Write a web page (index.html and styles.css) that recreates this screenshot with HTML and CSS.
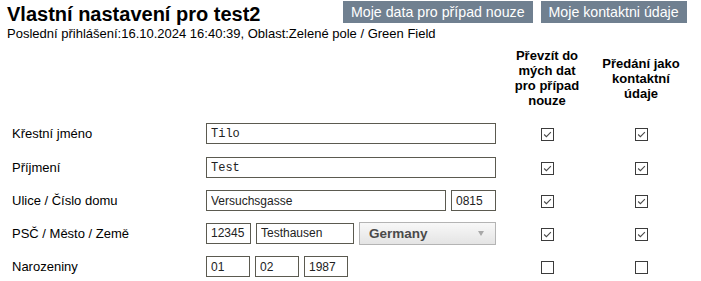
FILE: index.html
```html
<!DOCTYPE html>
<html lang="cs">
<head>
    <meta charset="UTF-8">
    <title>Vlastní nastavení</title>
    <link rel="stylesheet" href="styles.css">
</head>
<body>
    <div class="page">
        <div class="header">
            <h1>Vlastní nastavení pro test2</h1>
            <div class="actions">
                <a class="btn" href="#">Moje data pro případ nouze</a>
                <a class="btn" href="#">Moje kontaktni údaje</a>
            </div>
        </div>
        <div class="last-login">Poslední přihlášení:16.10.2024 16:40:39, Oblast:Zelené pole / Green Field</div>

        <table class="settings">
            <thead>
                <tr>
                    <th class="col-label"></th>
                    <th class="col-field"></th>
                    <th class="col-emergency">Převzít do mých dat pro případ nouze</th>
                    <th class="col-contact">Předání jako kontaktní údaje</th>
                </tr>
            </thead>
            <tbody>
                <tr class="first">
                    <td class="label">Křestní jméno</td>
                    <td><div class="fields"><input class="mono w-full" type="text" value="Tilo"></div></td>
                    <td class="check"><span class="box"><svg viewBox="0 0 13 13"><path d="M2.5 6.5 L5.2 9 L10.5 3.8" /></svg></span></td>
                    <td class="check"><span class="box"><svg viewBox="0 0 13 13"><path d="M2.5 6.5 L5.2 9 L10.5 3.8" /></svg></span></td>
                </tr>
                <tr>
                    <td class="label">Příjmení</td>
                    <td><div class="fields"><input class="mono w-full" type="text" value="Test"></div></td>
                    <td class="check"><span class="box"><svg viewBox="0 0 13 13"><path d="M2.5 6.5 L5.2 9 L10.5 3.8" /></svg></span></td>
                    <td class="check"><span class="box"><svg viewBox="0 0 13 13"><path d="M2.5 6.5 L5.2 9 L10.5 3.8" /></svg></span></td>
                </tr>
                <tr>
                    <td class="label">Ulice / Číslo domu</td>
                    <td>
                        <div class="fields">
                            <input class="w-street" type="text" value="Versuchsgasse">
                            <input class="w-small" type="text" value="0815">
                        </div>
                    </td>
                    <td class="check"><span class="box"><svg viewBox="0 0 13 13"><path d="M2.5 6.5 L5.2 9 L10.5 3.8" /></svg></span></td>
                    <td class="check"><span class="box"><svg viewBox="0 0 13 13"><path d="M2.5 6.5 L5.2 9 L10.5 3.8" /></svg></span></td>
                </tr>
                <tr>
                    <td class="label">PSČ / Město / Země</td>
                    <td>
                        <div class="fields">
                            <input class="w-small" type="text" value="12345">
                            <input class="w-city" type="text" value="Testhausen">
                            <span class="select-wrap">
                                <select>
                                    <option>Germany</option>
                                    <option>Austria</option>
                                    <option>Switzerland</option>
                                </select>
                            </span>
                        </div>
                    </td>
                    <td class="check"><span class="box"><svg viewBox="0 0 13 13"><path d="M2.5 6.5 L5.2 9 L10.5 3.8" /></svg></span></td>
                    <td class="check"><span class="box"><svg viewBox="0 0 13 13"><path d="M2.5 6.5 L5.2 9 L10.5 3.8" /></svg></span></td>
                </tr>
                <tr>
                    <td class="label">Narozeniny</td>
                    <td>
                        <div class="fields">
                            <input class="w-date" type="text" value="01">
                            <input class="w-date" type="text" value="02">
                            <input class="w-date" type="text" value="1987">
                        </div>
                    </td>
                    <td class="check"><span class="box"></span></td>
                    <td class="check"><span class="box"></span></td>
                </tr>
            </tbody>
        </table>
    </div>
</body>
</html>
```

FILE: styles.css
```css
body {
    margin: 0;
    font-family: "Liberation Sans", Arial, sans-serif;
    color: #000;
    background: #fff;
}
.page {
    padding: 0 7px;
}
.header {
    display: flex;
    align-items: flex-start;
    white-space: nowrap;
}
h1 {
    flex-shrink: 0;
    width: 336px;
    margin: 0;
    padding-top: 2px;
    font-size: 20px;
    line-height: 24px;
    font-weight: bold;
}
.actions {
    display: flex;
    flex-shrink: 0;
    gap: 8px;
    margin-top: 1px;
}
.btn {
    display: block;
    height: 22px;
    padding: 0 8px;
    background-color: #708090;
    color: #fff;
    font-size: 14.2px;
    line-height: 22px;
    text-decoration: none;
}
.last-login {
    font-size: 13px;
    line-height: 15px;
    white-space: nowrap;
}
.settings {
    table-layout: fixed;
    width: 677px;
    border-collapse: collapse;
    border-spacing: 0;
    font-size: 13px;
}
.settings th {
    padding: 7px 0 8px;
    font-weight: bold;
    line-height: 15px;
    text-align: center;
    vertical-align: middle;
}
.col-label {
    width: 199px;
}
.col-field {
    width: 290px;
}
.settings th.col-emergency {
    width: 74px;
    padding-left: 14px;
    padding-right: 14px;
}
.settings th.col-contact {
    width: 82px;
    padding-left: 2px;
    padding-right: 2px;
}
.settings td {
    height: 33px;
    padding: 0;
    vertical-align: middle;
}
.settings tr.first td {
    height: 35px;
}
.settings td.label {
    padding-left: 5px;
    line-height: 15px;
    white-space: nowrap;
}
.fields {
    display: flex;
    gap: 5px;
}
input[type="text"] {
    box-sizing: border-box;
    flex-shrink: 0;
    height: 21px;
    margin: 0;
    padding: 0 4px;
    border: 1px solid #5b5a50;
    border-radius: 0;
    font-family: "Liberation Sans", Arial, sans-serif;
    font-size: 12px;
    color: #222;
    background: #fff;
}
input.mono {
    font-family: "Liberation Mono", "Courier New", monospace;
    font-size: 12px;
}
.w-full {
    width: 290px;
}
.w-street {
    width: 240px;
}
.w-small {
    width: 45px;
}
.w-city {
    width: 98px;
}
.w-date {
    width: 44px;
}
.select-wrap {
    position: relative;
    display: block;
    margin-top: -1px;
}
.select-wrap::after {
    content: "";
    position: absolute;
    right: 12px;
    top: 9px;
    border-left: 3.5px solid transparent;
    border-right: 3.5px solid transparent;
    border-top: 5px solid #a8a8a8;
    pointer-events: none;
}
select {
    appearance: none;
    -webkit-appearance: none;
    box-sizing: border-box;
    display: block;
    width: 137px;
    height: 23px;
    margin: 0;
    padding: 0 0 0 9px;
    border: 1px solid #b4b4b4;
    border-radius: 0;
    background: linear-gradient(#f8f8f8, #e4e4e4);
    font-family: "Liberation Sans", Arial, sans-serif;
    font-size: 13.5px;
    font-weight: bold;
    color: #4a4a4a;
}
.check {
    text-align: center;
}
.box {
    box-sizing: border-box;
    display: inline-block;
    width: 13px;
    height: 13px;
    border: 1px solid #3c3c3c;
    background: #fff;
    vertical-align: middle;
}
.box svg {
    display: block;
    width: 11px;
    height: 11px;
}
.box path {
    fill: none;
    stroke: #4a4a4a;
    stroke-width: 1.3;
}
```
